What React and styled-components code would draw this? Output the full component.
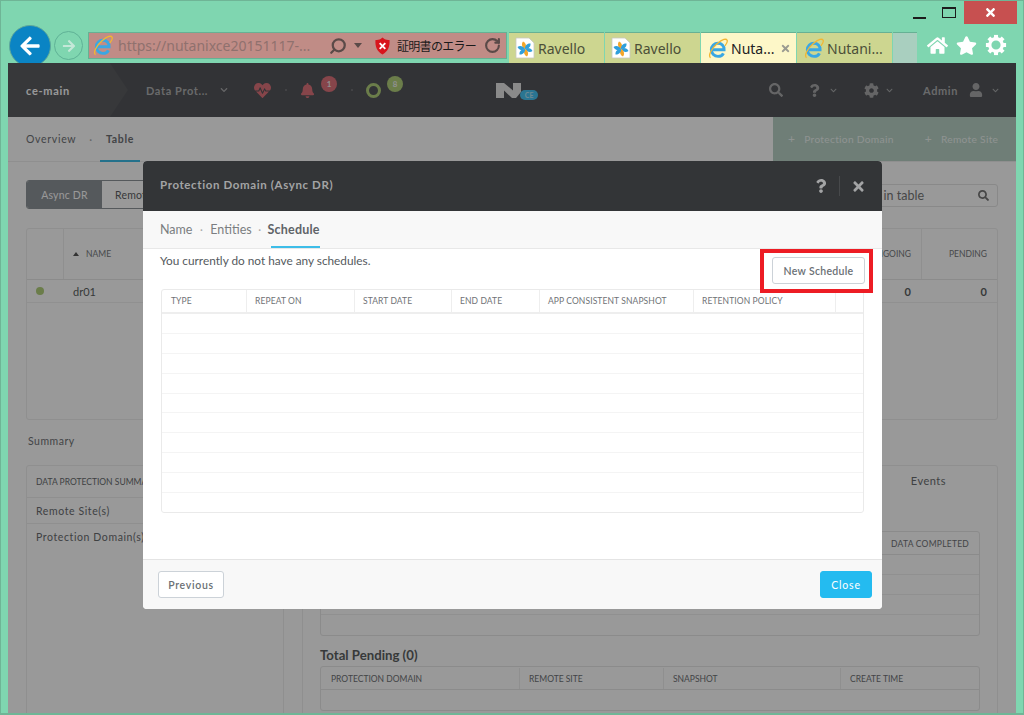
import React from "react";
import styled, { createGlobalStyle } from "styled-components";
import {
  FaBell,
  FaChevronDown,
  FaCog,
  FaHeartbeat,
  FaHome,
  FaQuestion,
  FaSearch,
  FaStar,
  FaTimes,
  FaUser,
  FaArrowLeft,
  FaArrowRight,
} from "react-icons/fa";
import { LuSearch, LuRotateCw } from "react-icons/lu";

const GlobalStyle = createGlobalStyle`
  html, body {
    margin: 0;
    padding: 0;
    background: #7fd6b0;
  }
  * {
    box-sizing: border-box;
  }
`;

const Window = styled.div`
  width: 1024px;
  height: 715px;
  overflow: hidden;
  background: #7fd6b0;
  border: 1px solid #6fb596;
  border-bottom-width: 2px;
  display: flex;
  flex-direction: column;
  font-family: "Lato", "Open Sans", sans-serif;
  position: relative;
`;

/* window buttons */
const TitleBar = styled.div`
  height: 31px;
  flex: none;
  display: flex;
  justify-content: flex-end;
  align-items: flex-start;
  padding-right: 6px;
`;
const WinButton = styled.div`
  width: ${(p) => p.$w || 30}px;
  height: 23px;
  display: flex;
  align-items: center;
  justify-content: center;
  background: ${(p) => p.$bg || "transparent"};
  color: #fff;
  font-size: 13px;
`;
const MinGlyph = styled.span`
  width: 13px;
  height: 2px;
  background: #1c1c1c;
  margin-top: 11px;
`;
const MaxGlyph = styled.span`
  width: 14px;
  height: 11px;
  border: 1px solid #1c1c1c;
  border-top-width: 2px;
`;

/* browser toolbar */
const Toolbar = styled.div`
  height: 31px;
  flex: none;
  display: flex;
  align-items: flex-start;
  padding-left: 8px;
`;
const BackButton = styled.div`
  width: 42px;
  height: 42px;
  margin-top: -7px;
  border-radius: 50%;
  background: #0a84c4;
  border: 1px solid #5fa89a;
  color: #fff;
  font-size: 22px;
  display: flex;
  align-items: center;
  justify-content: center;
  flex: none;
`;
const ForwardButton = styled.div`
  width: 29px;
  height: 29px;
  margin: -1px 0 0 3px;
  border-radius: 50%;
  border: 1px solid #5fb296;
  color: #c4e8d8;
  font-size: 14px;
  display: flex;
  align-items: center;
  justify-content: center;
  flex: none;
`;
const AddressBar = styled.div`
  width: 419px;
  height: 27px;
  margin-left: 5px;
  background: #c08c86;
  border: 1px solid #66b194;
  display: flex;
  align-items: center;
  padding-left: 3px;
  font-family: "Noto Sans", sans-serif;
  flex: none;
`;
const Url = styled.span`
  margin-left: 5px;
  width: 206px;
  font-size: 14px;
  color: #8f716e;
  white-space: nowrap;
`;
const ErrorText = styled.span`
  margin-left: 7px;
  width: 87px;
  font-family: "Noto Sans CJK JP", sans-serif;
  font-size: 12px;
  letter-spacing: -0.7px;
  color: #1a1a1a;
  white-space: nowrap;
`;
const AddressIcon = styled.span`
  display: flex;
  color: #5a4a48;
  font-size: ${(p) => p.$size || 18}px;
  margin-left: ${(p) => p.$gap || 0}px;
`;
const DropArrow = styled.span`
  width: 0;
  height: 0;
  margin-left: 7px;
  border: 4px solid transparent;
  border-top: 5px solid #5a4a48;
  border-bottom: 0;
`;
const TabStrip = styled.div`
  display: flex;
  height: 31px;
  margin-left: 2px;
  flex: none;
`;
const Tab = styled.div`
  width: ${(p) => p.$w || 95}px;
  height: 31px;
  margin-right: 1px;
  background: ${(p) => (p.$active ? "#fdf7c8" : p.$empty ? "#a9cfbf" : "#cdd690")};
  border-top: 1px solid #66b194;
  display: flex;
  align-items: center;
  padding-left: 6px;
  gap: 3px;
  font-family: "Noto Sans", sans-serif;
  font-size: 14px;
  color: ${(p) => (p.$active ? "#222" : "#4b4f38")};
`;
const TabClose = styled.span`
  display: flex;
  margin-left: 3px;
  font-size: 11px;
  color: #9a9a90;
`;
const ToolIcons = styled.div`
  display: flex;
  align-items: center;
  height: 26px;
  margin-left: 9px;
  gap: 8px;
  color: #fff;
  font-size: 21px;
`;

/* page */
const Page = styled.div`
  margin: 0 7px 0 7px;
  flex: 1;
  min-height: 0;
  position: relative;
  overflow: hidden;
  background: #fff;
  color: #6a6d70;
`;
const Scrim = styled.div`
  position: absolute;
  inset: 0;
  background: rgba(0, 0, 0, 0.4);
`;
const Nav = styled.div`
  height: 54px;
  background: #54565a;
  display: flex;
  align-items: center;
  color: #fff;
  position: relative;
`;
const Brand = styled.div`
  width: 102px;
  height: 54px;
  padding-left: 18px;
  display: flex;
  align-items: center;
  background: #5c5e61;
  font-size: 11px;
  font-weight: 700;
  letter-spacing: 0.7px;
  color: #fff;
  position: relative;
  &::after {
    content: "";
    position: absolute;
    right: -18px;
    top: 0;
    border-left: 18px solid #5c5e61;
    border-top: 27px solid transparent;
    border-bottom: 27px solid transparent;
  }
`;
const NavText = styled.span`
  font-size: 11px;
  font-weight: 700;
  letter-spacing: 0.6px;
  color: ${(p) => p.$color || "#b0b1b3"};
  margin-left: ${(p) => p.$gap || 0}px;
  white-space: nowrap;
`;
const NavIcon = styled.span`
  display: flex;
  color: ${(p) => p.$color || "#a8a9ab"};
  font-size: ${(p) => p.$size || 14}px;
  margin-left: ${(p) => p.$gap || 0}px;
`;
const Sep = styled.span`
  width: 2px;
  height: 2px;
  border-radius: 50%;
  background: #77797c;
  margin-left: ${(p) => p.$gap || 0}px;
`;
const Count = styled.span`
  width: 16px;
  height: 16px;
  border-radius: 50%;
  background: ${(p) => p.$bg};
  font-size: 8px;
  font-weight: 700;
  color: #f0f0f0;
  display: flex;
  align-items: center;
  justify-content: center;
  margin: -12px 0 0 ${(p) => p.$gap || 0}px;
`;
const Ring = styled.span`
  width: 15px;
  height: 15px;
  border-radius: 50%;
  border: 3.5px solid #b2d07c;
  margin-left: ${(p) => p.$gap || 0}px;
`;
const LogoWrap = styled.div`
  display: flex;
  align-items: flex-end;
  margin-left: 93px;
  width: 43px;
  flex: none;
`;
const CeBadge = styled.span`
  width: 18px;
  height: 10px;
  margin: 0 0 -2px -1px;
  border-radius: 5px;
  background: #46c4f4;
  color: #b8e4f4;
  font-size: 7px;
  font-weight: 700;
  display: flex;
  align-items: center;
  justify-content: center;
  flex: none;
  position: relative;
`;
const SubNav = styled.div`
  height: 45px;
  display: flex;
  justify-content: space-between;
  border-bottom: 1px solid #eee;
`;
const SubTabs = styled.div`
  display: flex;
  padding-left: 12px;
  align-items: center;
  font-size: 10.5px;
  letter-spacing: 0.7px;
`;
const SubTab = styled.span`
  height: 45px;
  display: flex;
  align-items: center;
  padding: 2px 6px 0;
  font-weight: ${(p) => (p.$on ? 700 : 400)};
  color: #6f7276;
  border-bottom: 2px solid ${(p) => (p.$on ? "#3dbde8" : "transparent")};
`;
const Actions = styled.div`
  width: 243px;
  background: #b9d2c7;
  color: #eef5f2;
  display: flex;
  align-items: center;
  padding: 0 0 2px 15px;
  gap: 31px;
  font-size: 10.2px;
  letter-spacing: 0.3px;
`;
const Plus = styled.span`
  font-size: 12px;
  margin-right: 9px;
`;
const Main = styled.div`
  padding: 18px 18px 0;
`;
const ToolRow = styled.div`
  display: flex;
  justify-content: space-between;
  align-items: flex-start;
  height: 48px;
`;
const Toggle = styled.div`
  display: flex;
  height: 29px;
  border-radius: 3px;
  overflow: hidden;
  border: 1px solid #8e9499;
  font-size: 10.5px;
  letter-spacing: 0.2px;
`;
const ToggleItem = styled.span`
  width: ${(p) => p.$w}px;
  display: flex;
  align-items: center;
  justify-content: center;
  white-space: nowrap;
  background: ${(p) => (p.$on ? "#8e9499" : "#fff")};
  color: ${(p) => (p.$on ? "#fff" : "#5d6063")};
`;
const SearchBox = styled.div`
  width: 220px;
  height: 23px;
  margin-top: 4px;
  border: 1px solid #e4e4e4;
  border-radius: 3px;
  display: flex;
  align-items: center;
  justify-content: flex-end;
  gap: 54px;
  padding-right: 8px;
  font-size: 12.5px;
  color: #777;
`;
const ListTable = styled.div`
  height: 192px;
  border: 1px solid #eee;
  border-radius: 3px;
`;
const ListHead = styled.div`
  height: 51px;
  display: grid;
  grid-template-columns: 36px 1fr 77px 76px;
  border-bottom: 1px solid #e8e8e8;
  font-size: 8.5px;
  color: #777a7d;
`;
const ListRow = styled.div`
  height: 23px;
  display: grid;
  grid-template-columns: 36px 1fr 77px 76px;
  align-items: center;
  border-bottom: 1px solid #f0f0f0;
  font-size: 11px;
  color: #5c5f62;
`;
const HeadCell = styled.span`
  display: flex;
  align-items: center;
  justify-content: ${(p) => (p.$right ? "flex-end" : "flex-start")};
  padding: ${(p) => (p.$right ? "0 10px 0 0" : "0 0 0 9px")};
  border-left: 1px solid ${(p) => (p.$first ? "transparent" : "#eee")};
  gap: 7px;
`;
const SortArrow = styled.span`
  width: 0;
  height: 0;
  border: 3px solid transparent;
  border-bottom: 4px solid #555;
  border-top: 0;
`;
const StatusDot = styled.span`
  width: 8px;
  height: 8px;
  margin-left: 9px;
  border-radius: 50%;
  background: #b2d07c;
`;
const RowCell = styled.span`
  text-align: ${(p) => (p.$right ? "right" : "left")};
  padding: ${(p) => (p.$right ? "0 10px 0 0" : "0 0 0 10px")};
  font-weight: ${(p) => (p.$right ? 700 : 400)};
`;
const SectionLabel = styled.div`
  height: 45px;
  padding: 15px 0 0 2px;
  font-size: 10.5px;
  letter-spacing: 0.5px;
  color: #6f7276;
`;
const Panels = styled.div`
  display: flex;
  gap: 18px;
  height: 260px;
`;
const SummaryPanel = styled.div`
  width: 258px;
  border: 1px solid #eee;
  border-radius: 3px;
`;
const SummaryRow = styled.div`
  height: ${(p) => p.$h}px;
  padding: 0 9px;
  display: flex;
  align-items: center;
  white-space: nowrap;
  overflow: hidden;
  border-bottom: 1px solid #eee;
  font-size: ${(p) => p.$size || 10.5}px;
  letter-spacing: ${(p) => (p.$size ? 0 : 0.6)}px;
  &:last-child {
    border-bottom: 0;
  }
`;
const DetailPanel = styled.div`
  flex: 1;
  border: 1px solid #eee;
  border-radius: 3px;
  padding: 0 17px;
`;
const DetailTabs = styled.div`
  height: 65px;
  display: flex;
  justify-content: flex-end;
  padding: 8px 34px 0 0;
  font-size: 11px;
  letter-spacing: 0.5px;
`;
const GridTable = styled.div`
  border: 1px solid #e8e8e8;
  border-radius: 3px;
`;
const GridHead = styled.div`
  height: 23px;
  padding-top: 1px;
  display: grid;
  grid-template-columns: ${(p) => p.$cols};
  border-bottom: 1px solid #e8e8e8;
  font-size: 8.5px;
  letter-spacing: ${(p) => p.$track || 0}px;
  color: #6f7276;
`;
const GridCell = styled.span`
  display: flex;
  align-items: center;
  padding-left: 9px;
  white-space: nowrap;
  border-left: 1px solid ${(p) => (p.$first ? "transparent" : "#eee")};
`;
const GridRow = styled.div`
  height: 20px;
  border-bottom: 1px solid #f0f0f0;
  &:last-child {
    border-bottom: 0;
  }
`;
const BlockTitle = styled.div`
  height: 30px;
  padding-top: 11px;
  font-size: 13.2px;
  font-weight: 700;
  color: #5c5f62;
`;

/* dialog */
const Dialog = styled.div`
  position: absolute;
  left: 135px;
  top: 98px;
  width: 739px;
  height: 448px;
  background: #fff;
  border-radius: 4px;
  overflow: hidden;
  display: flex;
  flex-direction: column;
`;
const DialogHead = styled.div`
  height: 50px;
  flex: none;
  background: #333537;
  display: flex;
  align-items: center;
  padding: 0 16px 0 17px;
  color: #a3a4a5;
`;
const DialogTitle = styled.div`
  flex: 1;
  font-size: 11.5px;
  font-weight: 700;
  letter-spacing: 0.62px;
  padding-bottom: 3px;
`;
const HeadDivider = styled.span`
  width: 1px;
  height: 20px;
  margin: 0 11px 0 11px;
  background: #47494b;
`;
const HeadIcon = styled.span`
  display: flex;
  font-size: ${(p) => p.$size || 14}px;
`;
const Steps = styled.div`
  height: 38px;
  flex: none;
  background: #f8f8f8;
  border-bottom: 1px solid #e8e8e8;
  display: flex;
  align-items: center;
  padding-left: 17px;
  font-size: 12.5px;
  color: #7b7e81;
`;
const Step = styled.span`
  height: 37px;
  display: flex;
  align-items: center;
  font-weight: ${(p) => (p.$on ? 700 : 400)};
  letter-spacing: ${(p) => (p.$on ? 0.2 : 0)}px;
  color: ${(p) => (p.$on ? "#5f6468" : "#7b7e81")};
  position: relative;
  &::after {
    content: "";
    display: ${(p) => (p.$on ? "block" : "none")};
    position: absolute;
    left: 3px;
    right: 0;
    bottom: 0;
    height: 2px;
    background: #3dbde8;
  }
`;
const StepDot = styled.span`
  margin: 0 ${(p) => p.$gap || 7.5}px;
  font-size: 11px;
  color: #aaa;
`;
const DialogBody = styled.div`
  flex: 1;
  padding: 0 17px;
  position: relative;
`;
const BodyTop = styled.div`
  height: 40px;
  display: flex;
  justify-content: space-between;
  align-items: flex-start;
  font-size: 11.8px;
  color: #555a5e;
`;
const Notice = styled.span`
  padding-top: 4px;
`;
const Button = styled.button`
  height: ${(p) => p.$h || 27}px;
  width: ${(p) => p.$w}px;
  border-radius: 3px;
  border: 1px solid ${(p) => (p.$primary ? "#24bbf0" : "#ccd2d8")};
  background: ${(p) => (p.$primary ? "#24bbf0" : "#fff")};
  color: ${(p) => (p.$primary ? "#fff" : "#6a6f74")};
  font-family: "Lato", sans-serif;
  font-size: 10.5px;
  font-weight: ${(p) => (p.$primary ? 400 : 600)};
  letter-spacing: ${(p) => p.$track || 0.3}px;
  padding: 0;
`;
const ScheduleButton = styled(Button)`
  margin: 8px 0 0 0;
`;
const Callout = styled.div`
  position: absolute;
  left: 617px;
  top: 0;
  width: 113px;
  height: 44px;
  border: 4px solid #ed1c24;
`;
const ScheduleTable = styled.div`
  width: 703px;
  height: 224px;
  margin-left: 1px;
  border: 1px solid #eaeaea;
  border-radius: 3px;
  overflow: hidden;
`;
const ScheduleHead = styled.div`
  height: 24px;
  display: grid;
  grid-template-columns: 84px 108px 97px 88px 154px 142px 1fr;
  border-bottom: 2px solid #eee;
  font-size: 8.5px;
  letter-spacing: 0.1px;
  color: #6f7276;
`;
const ScheduleCell = styled.span`
  display: flex;
  align-items: center;
  padding-left: 8px;
  white-space: nowrap;
  border-left: 1px solid ${(p) => (p.$first ? "transparent" : "#eee")};
`;
const ScheduleRow = styled.div`
  height: 19.9px;
  border-bottom: 1px solid #f4f4f4;
  &:last-child {
    border-bottom: 0;
  }
`;
const DialogFoot = styled.div`
  height: 50px;
  flex: none;
  background: #f8f8f8;
  border-top: 1px solid #e4e4e4;
  display: flex;
  justify-content: space-between;
  align-items: center;
  padding: 0 10px 0 15px;
`;

const IeLogo = ({ size = 21 }) => (
  <svg width={size} height={size} viewBox="0 0 24 24" fill="none" style={{ flex: "none" }}>
    <path
      d="M5.500 13.500h14c.3-4.800-3-7.500-7-7.500s-7.500 3.200-7.500 7.500 3.500 7.500 7.500 7.500c3 0 5.200-1.300 6.300-3.500"
      stroke="#3aa7e3"
      strokeWidth="3.400"
    />
    <path d="M4 22.500c-3-2.500 1-10.500 7.500-16S22 .5 23 2.500c.7 1.500-.5 4-2.500 6.500" stroke="#f2b632" strokeWidth="1.500" />
  </svg>
);

const RavelloIcon = () => (
  <svg width="20" height="22" viewBox="0 0 20 22" style={{ flex: "none" }}>
    <path d="M1 1h13l5 5v15H1z" fill="#fff" stroke="#c8c8c0" strokeWidth="0.8" />
    {[0, 60, 120, 180, 240, 300].map((angle, i) => (
      <path
        key={angle}
        d="M10 12C7 11 6 7 8 4.500c2.500 1 4 4 2 7.500z"
        fill={i % 3 === 0 ? "#f4a62a" : "#2f9fdc"}
        transform={`rotate(${angle} 10 12)`}
      />
    ))}
  </svg>
);

const ShieldIcon = () => (
  <svg width="15" height="18" viewBox="0 0 16 18">
    <path d="M8 0l2 1.500c1.500.8 3.500 1 5.500 1 .5 7-1.500 12-7.500 15.500C2 14.500 0 9.500.5 2.500c2 0 4-.2 5.500-1z" fill="#d8141c" />
    <path d="M5 6l6 6M11 6l-6 6" stroke="#fff" strokeWidth="2" />
  </svg>
);

const GearIcon = () => (
  <svg width="22" height="22" viewBox="0 0 24 24" fill="none">
    <circle cx="12" cy="12" r="6.800" stroke="#fff" strokeWidth="3.600" />
    {[0, 45, 90, 135, 180, 225, 270, 315].map((angle) => (
      <rect key={angle} x="9.800" y="1" width="4.400" height="5" fill="#fff" transform={`rotate(${angle} 12 12)`} />
    ))}
  </svg>
);

const NutanixLogo = () => (
  <svg width="25" height="15" viewBox="0 0 25 15" fill="#e6e6e6" style={{ flex: "none" }}>
    <path d="M0 0h8l9 7.500V0h8v9l-5 6h-4L8 7.500V15H0z" />
  </svg>
);

const tabs = [
  { id: 1, label: "Ravello", icon: "ravello" },
  { id: 2, label: "Ravello", icon: "ravello" },
  { id: 3, label: "Nuta...", icon: "ie", active: true },
  { id: 4, label: "Nutani...", icon: "ie" },
];
const scheduleCols = ["TYPE", "REPEAT ON", "START DATE", "END DATE", "APP CONSISTENT SNAPSHOT", "RETENTION POLICY", ""];
const pendingCols = ["PROTECTION DOMAIN", "REMOTE SITE", "SNAPSHOT", "CREATE TIME"];

export default function App() {
  return (
    <>
      <GlobalStyle />
      <Window>
        <TitleBar>
          <WinButton><MinGlyph /></WinButton>
          <WinButton><MaxGlyph /></WinButton>
          <WinButton $w={53} $bg="#c75050"><FaTimes /></WinButton>
        </TitleBar>
        <Toolbar>
          <BackButton><FaArrowLeft /></BackButton>
          <ForwardButton><FaArrowRight /></ForwardButton>
          <AddressBar>
            <IeLogo />
            <Url>https://nutanixce20151117-...</Url>
            <AddressIcon $gap={5}><LuSearch strokeWidth={3} style={{ transform: "scaleX(-1)" }} /></AddressIcon>
            <DropArrow />
            <AddressIcon $gap={13}><ShieldIcon /></AddressIcon>
            <ErrorText>証明書のエラー</ErrorText>
            <AddressIcon $size={17}><LuRotateCw strokeWidth={3} /></AddressIcon>
          </AddressBar>
          <TabStrip>
            {tabs.map((tab) => (
              <Tab key={tab.id} $active={tab.active}>
                {tab.icon === "ie" ? <IeLogo /> : <RavelloIcon />}
                {tab.label}
                {tab.active && <TabClose><FaTimes /></TabClose>}
              </Tab>
            ))}
            <Tab $w={24} $empty />
          </TabStrip>
          <ToolIcons>
            <FaHome />
            <FaStar />
            <GearIcon />
          </ToolIcons>
        </Toolbar>

        <Page>
          <Nav>
            <Brand>ce-main</Brand>
            <NavText $gap={36}>Data Prot...</NavText>
            <NavIcon $gap={12} $size={8}><FaChevronDown /></NavIcon>
            <NavIcon $gap={26} $size={17} $color="#e0737c"><FaHeartbeat /></NavIcon>
            <Sep $gap={14} />
            <NavIcon $gap={13} $size={15} $color="#e0737c"><FaBell /></NavIcon>
            <Count $gap={6} $bg="#e0737c">1</Count>
            <Sep $gap={14} />
            <Ring $gap={13} />
            <Count $gap={6} $bg="#b2d07c">8</Count>
            <LogoWrap>
              <NutanixLogo />
              <CeBadge>CE</CeBadge>
            </LogoWrap>
            <NavIcon $gap={230} $size={14}><FaSearch /></NavIcon>
            <NavIcon $gap={25} $size={13}><FaQuestion /></NavIcon>
            <NavIcon $gap={9} $size={7}><FaChevronDown /></NavIcon>
            <NavIcon $gap={27} $size={15}><FaCog /></NavIcon>
            <NavIcon $gap={7} $size={7}><FaChevronDown /></NavIcon>
            <NavText $gap={30}>Admin</NavText>
            <NavIcon $gap={11} $size={14}><FaUser /></NavIcon>
            <NavIcon $gap={9} $size={7}><FaChevronDown /></NavIcon>
          </Nav>
          <SubNav>
            <SubTabs>
              <SubTab>Overview</SubTab>
              <StepDot $gap={7}>·</StepDot>
              <SubTab $on>Table</SubTab>
            </SubTabs>
            <Actions>
              <span><Plus>+</Plus>Protection Domain</span>
              <span><Plus>+</Plus>Remote Site</span>
            </Actions>
          </SubNav>
          <Main>
            <ToolRow>
              <Toggle>
                <ToggleItem $on $w={75}>Async DR</ToggleItem>
                <ToggleItem $w={84}>Remote Site</ToggleItem>
              </Toggle>
              <SearchBox>
                <span>Search in table</span>
                <FaSearch size={11} />
              </SearchBox>
            </ToolRow>
            <ListTable>
              <ListHead>
                <HeadCell $first />
                <HeadCell><SortArrow />NAME</HeadCell>
                <HeadCell $right>ONGOING</HeadCell>
                <HeadCell $right>PENDING</HeadCell>
              </ListHead>
              <ListRow>
                <StatusDot />
                <RowCell>dr01</RowCell>
                <RowCell $right>0</RowCell>
                <RowCell $right>0</RowCell>
              </ListRow>
            </ListTable>
            <SectionLabel>Summary</SectionLabel>
            <Panels>
              <SummaryPanel>
                <SummaryRow $h={32} $size={8.5}>DATA PROTECTION SUMMARY</SummaryRow>
                <SummaryRow $h={26}>Remote Site(s)</SummaryRow>
                <SummaryRow $h={26}>Protection Domain(s)</SummaryRow>
              </SummaryPanel>
              <DetailPanel>
                <DetailTabs>Events</DetailTabs>
                <GridTable>
                  <GridHead $cols="1fr 98px" $track={0.25}>
                    <GridCell $first />
                    <GridCell>DATA COMPLETED</GridCell>
                  </GridHead>
                  <GridRow />
                  <GridRow />
                  <GridRow />
                  <GridRow />
                </GridTable>
                <BlockTitle>Total Pending (0)</BlockTitle>
                <GridTable>
                  <GridHead $cols="198px 144px 177px 1fr">
                    {pendingCols.map((col, i) => (
                      <GridCell key={col} $first={i === 0}>{col}</GridCell>
                    ))}
                  </GridHead>
                  <GridRow />
                </GridTable>
              </DetailPanel>
            </Panels>
          </Main>

          <Scrim />

          <Dialog>
            <DialogHead>
              <DialogTitle>Protection Domain (Async DR)</DialogTitle>
              <HeadIcon><FaQuestion /></HeadIcon>
              <HeadDivider />
              <HeadIcon $size={15}><FaTimes /></HeadIcon>
            </DialogHead>
            <Steps>
              <Step>Name</Step>
              <StepDot>·</StepDot>
              <Step>Entities</Step>
              <StepDot $gap={6.5}>·</StepDot>
              <Step $on>Schedule</Step>
            </Steps>
            <DialogBody>
              <BodyTop>
                <Notice>You currently do not have any schedules.</Notice>
                <ScheduleButton $w={93}>New Schedule</ScheduleButton>
              </BodyTop>
              <Callout />
              <ScheduleTable>
                <ScheduleHead>
                  {scheduleCols.map((col, i) => (
                    <ScheduleCell key={col || i} $first={i === 0}>{col}</ScheduleCell>
                  ))}
                </ScheduleHead>
                {Array.from({ length: 10 }, (_, i) => (
                  <ScheduleRow key={i} />
                ))}
              </ScheduleTable>
            </DialogBody>
            <DialogFoot>
              <Button $w={66} $track={0.7}>Previous</Button>
              <Button $w={52} $primary $track={0.8}>Close</Button>
            </DialogFoot>
          </Dialog>
        </Page>
      </Window>
    </>
  );
}
